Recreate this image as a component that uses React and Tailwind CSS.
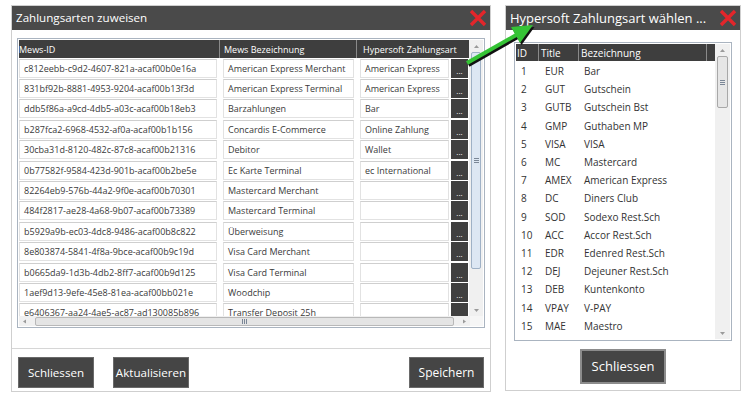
import React from "react";

const FONT = { fontFamily: '"Open Sans", "Noto Sans", sans-serif' };

const leftRows = [
  ["c812eebb-c9d2-4607-821a-acaf00b0e16a", "American Express Merchant", "American Express"],
  ["831bf92b-8881-4953-9204-acaf00b13f3d", "American Express Terminal", "American Express"],
  ["ddb5f86a-a9cd-4db5-a03c-acaf00b18eb3", "Barzahlungen", "Bar"],
  ["b287fca2-6968-4532-af0a-acaf00b1b156", "Concardis E-Commerce", "Online Zahlung"],
  ["30cba31d-8120-482c-87c8-acaf00b21316", "Debitor", "Wallet"],
  ["0b77582f-9584-423d-901b-acaf00b2be5e", "Ec Karte Terminal", "ec International"],
  ["82264eb9-576b-44a2-9f0e-acaf00b70301", "Mastercard Merchant", ""],
  ["484f2817-ae28-4a68-9b07-acaf00b73389", "Mastercard Terminal", ""],
  ["b5929a9b-ec03-4dc8-9486-acaf00b8c822", "Überweisung", ""],
  ["8e803874-5841-4f8a-9bce-acaf00b9c19d", "Visa Card Merchant", ""],
  ["b0665da9-1d3b-4db2-8ff7-acaf00b9d125", "Visa Card Terminal", ""],
  ["1aef9d13-9efe-45e8-81ea-acaf00bb021e", "Woodchip", ""],
  ["e6406367-aa24-4ae5-ac87-ad130085b896", "Transfer Deposit 25h", ""],
];

const rightRows = [
  ["1", "EUR", "Bar"],
  ["2", "GUT", "Gutschein"],
  ["3", "GUTB", "Gutschein Bst"],
  ["4", "GMP", "Guthaben MP"],
  ["5", "VISA", "VISA"],
  ["6", "MC", "Mastercard"],
  ["7", "AMEX", "American Express"],
  ["8", "DC", "Diners Club"],
  ["9", "SOD", "Sodexo Rest.Sch"],
  ["10", "ACC", "Accor Rest.Sch"],
  ["11", "EDR", "Edenred Rest.Sch"],
  ["12", "DEJ", "Dejeuner Rest.Sch"],
  ["13", "DEB", "Kuntenkonto"],
  ["14", "VPAY", "V-PAY"],
  ["15", "MAE", "Maestro"],
];

function RedX() {
  return (
    <svg width="18" height="18" viewBox="0 0 18 18">
      <path d="M2 2 L16 16 M16 2 L2 16" stroke="#e3262b" strokeWidth="3.4" strokeLinecap="butt" />
    </svg>
  );
}

function TitleBar({ title, size }) {
  return (
    <div className="flex h-[24px] items-center justify-between bg-[#4a4a4a] pl-[4px] pr-[3px] text-white">
      <span className={size + " leading-none whitespace-nowrap"}>{title}</span>
      <RedX />
    </div>
  );
}

function Arrow({ dir }) {
  return (
    <svg width="7" height="5" viewBox="0 0 7 5">
      {dir === "up" && <path d="M1 4 L3.5 1 L6 4 Z" fill="#9a9a9a" />}
      {dir === "down" && <path d="M1 1 L3.5 4 L6 1 Z" fill="#9a9a9a" />}
      {dir === "left" && <path d="M4 0.5 L1 2.5 L4 4.5 Z" fill="#9a9a9a" />}
      {dir === "right" && <path d="M2 0.5 L5 2.5 L2 4.5 Z" fill="#9a9a9a" />}
    </svg>
  );
}

function Grip({ vertical }) {
  return vertical ? (
    <div className="flex flex-col gap-px">
      <div className="h-px w-[5px] bg-[#7a8696]" />
      <div className="h-px w-[5px] bg-[#7a8696]" />
      <div className="h-px w-[5px] bg-[#7a8696]" />
    </div>
  ) : (
    <div className="flex gap-px">
      <div className="h-[5px] w-px bg-[#7a8696]" />
      <div className="h-[5px] w-px bg-[#7a8696]" />
      <div className="h-[5px] w-px bg-[#7a8696]" />
    </div>
  );
}

function LeftWindow() {
  return (
    <div className="flex h-[387px] w-[480px] flex-col border border-[#cfcfcf] bg-white">
      <TitleBar title="Zahlungsarten zuweisen" size="text-[11.6px]" />
      <div className="ml-[5px] mt-[8px] flex h-[290px] w-[468px] flex-col border border-[#aab4c0] p-px">
        <div className="flex h-[276px]">
          <div className="flex w-[451px] flex-col overflow-hidden">
            <div className="flex h-[18px] shrink-0 bg-[#3e3e3e] text-[9px] text-white">
              <div className="flex w-[201px] items-center border-r border-[#8a8a8a] pl-0 leading-none">Mews-ID</div>
              <div className="flex w-[137px] items-center border-r border-[#8a8a8a] pl-[4px] leading-none">Mews Bezeichnung</div>
              <div className="flex flex-1 items-center pl-[6px] leading-none whitespace-nowrap">Hypersoft Zahlungsart</div>
            </div>
            {leftRows.map((r, i) => (
              <div key={i} className="flex h-[20.4px] shrink-0 items-center text-[9px] text-[#3a3a3a]">
                <div className="flex h-[19px] w-[198px] items-center border border-[#e2e2e2] border-t-[#cfcfcf] pl-[4px] whitespace-nowrap leading-none">{r[0]}</div>
                <div className="ml-[6px] flex h-[19px] w-[131px] items-center overflow-hidden border border-[#e2e2e2] border-t-[#cfcfcf] pl-[4px] whitespace-nowrap leading-none">{r[1]}</div>
                <div className="ml-[6px] flex h-[19px] w-[89px] items-center overflow-hidden border border-[#e2e2e2] border-t-[#cfcfcf] pl-[4px] whitespace-nowrap leading-none">{r[2]}</div>
                <div className="ml-[2px] flex h-[19px] w-[17px] items-end justify-center bg-[#404040] pb-[3px] text-[8px] leading-none text-white">...</div>
              </div>
            ))}
          </div>
          <div className="flex w-[14px] flex-col bg-[#f0f0f0]">
            <div className="flex h-[12px] items-center justify-center"><Arrow dir="up" /></div>
            <div className="mx-[2px] flex h-[217px] items-center justify-center rounded-[2px] border border-[#9fb1c6] bg-[#dde7f3]">
              <Grip vertical />
            </div>
            <div className="flex-1" />
            <div className="flex h-[12px] items-center justify-center"><Arrow dir="down" /></div>
          </div>
        </div>
        <div className="flex h-[11px]">
          <div className="flex w-[451px] items-center bg-[#f0f0f0]">
            <div className="flex w-[12px] justify-center"><Arrow dir="left" /></div>
            <div className="ml-[4px] flex h-[9px] w-[419px] items-center justify-center rounded-[2px] border border-[#b8b8b8] bg-[#e4e4e4]">
              <Grip />
            </div>
            <div className="flex-1" />
            <div className="flex w-[12px] justify-center"><Arrow dir="right" /></div>
          </div>
          <div className="flex-1 bg-[#f6f6f6]" />
        </div>
      </div>
      <div className="mt-[20px] h-px bg-[#d6d6d6]" />
      <div className="flex items-start px-[6px] pt-[8px] text-[11.6px] text-white">
        <div className="flex h-[31px] w-[76px] items-center justify-center border border-[#6a6a6a] bg-[#454545]">Schliessen</div>
        <div className="ml-[19px] flex h-[31px] w-[76px] items-center justify-center border border-[#6a6a6a] bg-[#454545]">Aktualisieren</div>
        <div className="flex-1" />
        <div className="flex h-[31px] w-[75px] items-center justify-center border border-[#6a6a6a] bg-[#454545] text-[12px]">Speichern</div>
      </div>
    </div>
  );
}

function RightWindow() {
  return (
    <div className="flex h-[386px] w-[236px] flex-col border border-[#cfcfcf] bg-white">
      <TitleBar title="Hypersoft Zahlungsart wählen ..." size="text-[13px]" />
      <div className="ml-[8px] mt-[12px] flex h-[299px] w-[218px] border border-[#aab4c0] p-px">
        <div className="flex w-[199px] flex-col">
          <div className="flex h-[17px] shrink-0 bg-[#3e3e3e] text-[10px] leading-none text-white">
            <div className="flex w-[23px] items-center border-r border-[#8a8a8a] pl-[1px]">ID</div>
            <div className="flex w-[40px] items-center border-r border-[#8a8a8a] pl-[2px]">Title</div>
            <div className="flex w-[128px] items-center border-r border-[#8a8a8a] pl-[2px]">Bezeichnung</div>
            <div className="flex-1" />
          </div>
          <div className="h-[1px]" />
          {rightRows.map((r, i) => (
            <div key={i} className="flex h-[18.2px] shrink-0 items-center text-[10px] leading-none text-[#333]">
              <div className="w-[23px] pl-[5px]">{r[0]}</div>
              <div className="w-[40px] pl-[6px]">{r[1]}</div>
              <div className="pl-[5px] whitespace-nowrap">{r[2]}</div>
            </div>
          ))}
        </div>
        <div className="flex w-[15px] flex-col bg-[#f0f0f0]">
          <div className="flex h-[12px] items-center justify-center"><Arrow dir="up" /></div>
          <div className="mx-[2px] flex h-[52px] items-center justify-center rounded-[2px] border border-[#a8a8a8] bg-[#e6e6e6]">
            <Grip vertical />
          </div>
          <div className="flex-1" />
          <div className="flex h-[12px] items-center justify-center"><Arrow dir="down" /></div>
        </div>
      </div>
      <div className="flex justify-center pt-[8px]">
        <div className="flex h-[35px] w-[86px] items-center justify-center border-2 border-[#8c8c8c] bg-[#454545] text-[13px] text-white">Schliessen</div>
      </div>
    </div>
  );
}

function GreenArrow() {
  return (
    <svg className="pointer-events-none absolute left-0 top-0" width="744" height="394" viewBox="0 0 744 394">
      <g transform="translate(1.5,2)">
        <line x1="467" y1="63" x2="518" y2="34" stroke="#111" strokeWidth="4" />
        <polygon points="533,25 520,43 511,27" fill="#111" />
      </g>
      <line x1="467" y1="63" x2="518" y2="34" stroke="#35c335" strokeWidth="4" />
      <polygon points="533,25 520,43 511,27" fill="#35c335" />
    </svg>
  );
}

export default function App() {
  return (
    <div className="relative h-[394px] w-[744px] overflow-hidden bg-white" style={FONT}>
      <div className="flex gap-[14px] pl-[11px] pt-[5px]">
        <LeftWindow />
        <RightWindow />
      </div>
      <GreenArrow />
    </div>
  );
}
